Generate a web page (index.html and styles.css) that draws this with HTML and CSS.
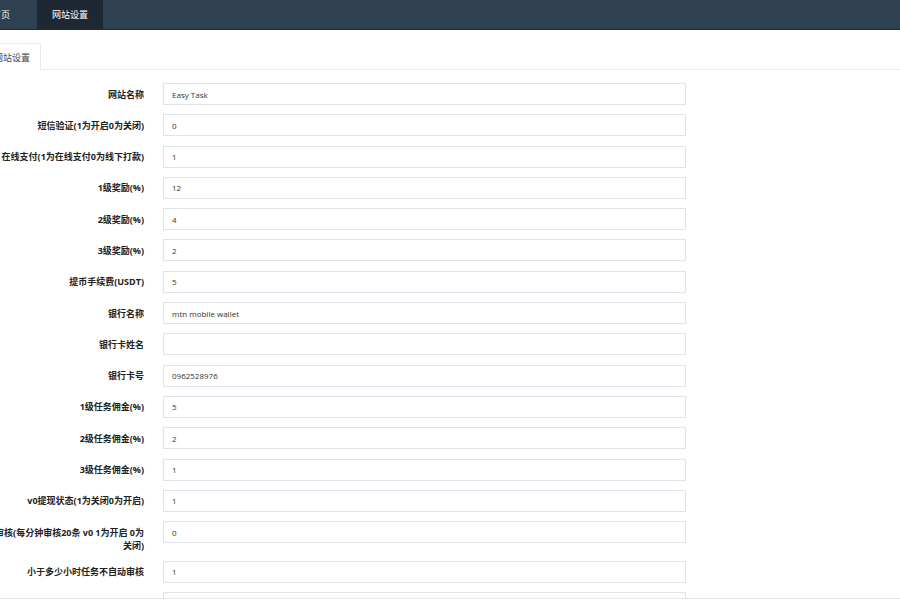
FILE: index.html
```html
<!DOCTYPE html>
<html>
   <head>
      <meta charset="utf-8">
      <title>网站设置</title>
      <link rel="stylesheet" href="styles.css">
   </head>
   <body>
      <nav class="topnav">
         <a class="topnav-item" href="#">首页</a>
         <a class="topnav-item active" href="#">网站设置</a>
      </nav>
      <div class="tabs">
         <span class="tab">网站设置</span>
      </div>
      <form class="settings-form">
         <div class="form-row">
            <label>网站名称</label>
            <input type="text" value="Easy Task">
         </div>
         <div class="form-row">
            <label>短信验证(1为开启0为关闭)</label>
            <input type="text" value="0">
         </div>
         <div class="form-row">
            <label>在线支付(1为在线支付0为线下打款)</label>
            <input type="text" value="1">
         </div>
         <div class="form-row">
            <label>1级奖励(%)</label>
            <input type="text" value="12">
         </div>
         <div class="form-row">
            <label>2级奖励(%)</label>
            <input type="text" value="4">
         </div>
         <div class="form-row">
            <label>3级奖励(%)</label>
            <input type="text" value="2">
         </div>
         <div class="form-row">
            <label>提币手续费(USDT)</label>
            <input type="text" value="5">
         </div>
         <div class="form-row">
            <label>银行名称</label>
            <input type="text" value="mtn mobile wallet">
         </div>
         <div class="form-row">
            <label>银行卡姓名</label>
            <input type="text" value="">
         </div>
         <div class="form-row">
            <label>银行卡号</label>
            <input type="text" value="0962528976">
         </div>
         <div class="form-row">
            <label>1级任务佣金(%)</label>
            <input type="text" value="5">
         </div>
         <div class="form-row">
            <label>2级任务佣金(%)</label>
            <input type="text" value="2">
         </div>
         <div class="form-row">
            <label>3级任务佣金(%)</label>
            <input type="text" value="1">
         </div>
         <div class="form-row">
            <label>v0提现状态(1为关闭0为开启)</label>
            <input type="text" value="1">
         </div>
         <div class="form-row">
            <label>自动审核(每分钟审核20条 v0 1为开启 0为关闭)</label>
            <input type="text" value="0">
         </div>
         <div class="form-row">
            <label>小于多少小时任务不自动审核</label>
            <input type="text" value="1">
         </div>
         <div class="form-row">
            <label>客服链接</label>
            <input type="text" value="">
         </div>
      </form>
      <footer class="footer"></footer>
   </body>
</html>
```

FILE: styles.css
```css
body {
   margin: 0;
   font-family: "Open Sans", "Noto Sans CJK SC", sans-serif;
   color: #333;
   background: #fff;
   overflow: hidden;
}
.topnav {
   display: flex;
   gap: 12px;
   height: 29px;
   margin-left: -23px;
   background: #2f4050;
   border-bottom: 1px solid #1f2b38;
}
.topnav-item {
   display: flex;
   align-items: center;
   padding: 0 15px;
   font-size: 9px;
   color: #fff;
   text-decoration: none;
}
.topnav-item.active {
   background: #1d2833;
}
.tabs {
   display: flex;
   margin-top: 13px;
   margin-left: -17px;
   border-bottom: 1px solid #e9eced;
}
.tab {
   display: flex;
   align-items: center;
   height: 26px;
   padding: 0 10px;
   font-size: 9px;
   color: #444;
   border: 1px solid #e7eaec;
   border-bottom: none;
   background: #fff;
   margin-bottom: -1px;
}
.settings-form {
   margin-top: 13px;
   margin-left: -30px;
}
.form-row {
   display: flex;
   align-items: flex-start;
   gap: 19px;
   margin-bottom: 9.3px;
}
.form-row label {
   width: 174px;
   flex: none;
   padding-top: 4.5px;
   font-size: 9px;
   line-height: 13px;
   font-weight: bold;
   text-align: right;
   color: #222;
}
.form-row input {
   box-sizing: border-box;
   width: 523px;
   height: 22px;
   padding: 0 8px;
   font-family: "Open Sans", "Noto Sans CJK SC", sans-serif;
   font-size: 8px;
   color: #333;
   border: 1px solid #dfe4ea;
   border-radius: 0;
   outline: none;
}
.footer {
   position: fixed;
   left: 0;
   right: 0;
   top: 598px;
   height: 10px;
   background: #fff;
   border-top: 1px solid #e3e6e8;
}
```
